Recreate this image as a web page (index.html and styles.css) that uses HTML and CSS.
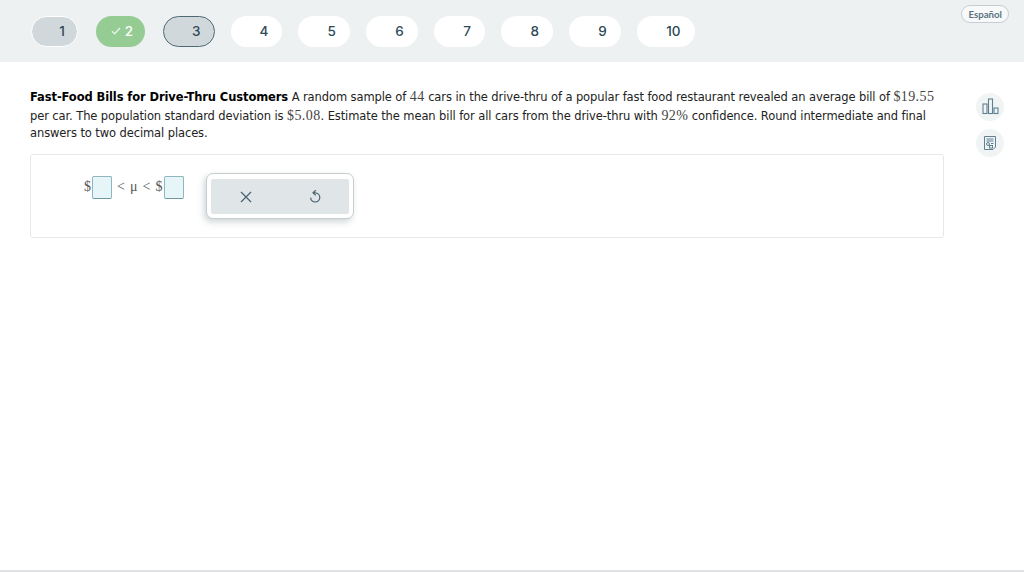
FILE: index.html
```html
<!DOCTYPE html>
<html lang="en">
<head>
  <meta charset="UTF-8" />
  <title>Fast-Food Bills for Drive-Thru Customers</title>
  <link rel="stylesheet" href="styles.css">
</head>
<body>
  <header class="topbar">
    <nav class="steps">
      <div class="step visited">1</div>
      <div class="step correct">
        <svg class="check" width="10" height="8" viewBox="0 0 10 8"><path d="M1 4.2 L3.6 6.8 L9 1" fill="none" stroke="#e6f3e6" stroke-width="1.4"/></svg>
        2
      </div>
      <div class="step current">3</div>
      <div class="step">4</div>
      <div class="step">5</div>
      <div class="step">6</div>
      <div class="step">7</div>
      <div class="step">8</div>
      <div class="step">9</div>
      <div class="step wide">10</div>
    </nav>
    <div class="lang">Español</div>
  </header>

  <main class="content">
    <section class="question">
      <p class="prompt"><b>Fast-Food Bills for Drive-Thru Customers</b> A random sample of <span class="num">44</span> cars in the drive-thru of a popular fast food restaurant revealed an average bill of <span class="num">$19.55</span> per car. The population standard deviation is <span class="num">$5.08</span>. Estimate the mean bill for all cars from the drive-thru with <span class="num">92%</span> confidence. Round intermediate and final answers to two decimal places.</p>
      <div class="answer-card">
        <div class="formula">
          <span class="sym">$</span><span class="blank first"></span>
          <span class="sym rel">&lt; μ &lt; $</span><span class="blank"></span>
        </div>
        <div class="toolbox">
          <div class="toolbox-inner">
            <svg width="14" height="14" viewBox="0 0 14 14"><path d="M2 2 L12 12 M12 2 L2 12" fill="none" stroke="#4a6572" stroke-width="1.3"/></svg>
            <svg width="14" height="16" viewBox="0 0 14 16"><path d="M7.8 1.2 L5 3.8 L7.8 6.4 M5 3.8 H7.2 A4.6 4.6 0 1 1 2.6 8.6" fill="none" stroke="#4a6572" stroke-width="1.2"/></svg>
          </div>
        </div>
      </div>
    </section>
    <aside class="side">
      <div class="side-btn">
        <svg width="18" height="18" viewBox="0 0 18 18"><g fill="none" stroke="#5f8090" stroke-width="1.1"><rect x="2" y="6" width="4" height="9.5"/><rect x="7.5" y="1" width="4" height="14.5"/><rect x="13" y="10" width="4" height="5.5"/></g></svg>
      </div>
      <div class="side-btn">
        <svg width="14" height="16" viewBox="0 0 14 16"><g fill="none" stroke="#5f8090" stroke-width="1"><path d="M1.5 1.5 H12.5 V12 L10 14.5 H1.5 Z"/><path d="M3.5 4 H10.5 M3.5 6 H10.5 M8 8.5 H10.5"/><circle cx="5" cy="9" r="1.5"/><rect x="6.5" y="10.5" width="3" height="2.5"/></g></svg>
      </div>
    </aside>
  </main>
</body>
</html>
```

FILE: styles.css
```css
* { box-sizing: border-box; }
html, body { height: 100%; }
body {
  margin: 0;
  background: #fff;
  font-family: "DejaVu Sans", sans-serif;
  color: #222;
  border-bottom: 2px solid #dfe3e5;
  height: 572px;
  overflow: hidden;
}
.topbar {
  height: 62px;
  background: #eef1f2;
  display: flex;
  justify-content: space-between;
  padding: 4px 15px 0 31px;
}
.steps {
  display: flex;
  align-items: center;
  gap: 16px;
  height: 54px;
}
.step {
  width: 51.7px;
  height: 31px;
  padding-left: 15px;
  border-radius: 16px;
  background: #fff;
  color: #2d4a57;
  font-family: Inter, sans-serif;
  font-weight: 500;
  font-size: 13.5px;
  display: flex;
  align-items: center;
  justify-content: center;
}
.step.wide { width: 58px; }
.step.visited {
  width: 47px;
  background: #d0d8dc;
  border: 1px solid #fff;
}
.step.correct {
  width: 49px;
  margin-left: 2px;
  padding-left: 3px;
  gap: 4px;
  background: #95cc94;
  color: #fff;
}
.step.current {
  margin-left: 2px;
  background: #d0d8dc;
  border: 1.5px solid #4f6a77;
}
.lang {
  margin-top: 1px;
  height: 18px;
  padding: 0 6px;
  border: 1px solid #c6ced2;
  border-radius: 9px;
  background: #f8f9fa;
  color: #5b7280;
  font-family: Lato, sans-serif;
  font-weight: 700;
  font-size: 9.7px;
  line-height: 16px;
}
.content {
  display: flex;
  padding: 25px 15px 0 30px;
}
.question { width: 914px; }
.prompt {
  margin: 0;
  font-size: 11.5px;
  letter-spacing: -0.1px;
  line-height: 16px;
}
.prompt b { color: #000; }
.num {
  font-family: "Liberation Serif", serif;
  font-size: 14px;
  letter-spacing: 0.4px;
  line-height: 19px;
  color: #444;
}
.answer-card {
  margin-top: 13px;
  height: 84px;
  border: 1px solid #e6e9eb;
  border-radius: 3px;
  display: flex;
  align-items: flex-start;
  padding: 18px 0 0 53px;
}
.formula {
  display: flex;
  align-items: center;
  width: 122px;
  height: 26px;
  margin-top: 1px;
  font-family: "Liberation Serif", serif;
  font-size: 14px;
  color: #555;
}
.rel {
  margin: 0 1px 0 5px;
  letter-spacing: 0.8px;
}
.blank {
  width: 20px;
  height: 23px;
  background: #e6f5f8;
  border: 1px solid #8fb5bf;
  border-bottom-color: #6f98a5;
  border-radius: 2px;
}
.blank.first { margin-left: 1px; }
.toolbox {
  width: 148px;
  height: 46px;
  padding: 5px 4px;
  background: #fff;
  border: 1px solid #c6ced2;
  border-radius: 7px;
  box-shadow: -2px 3px 6px rgba(70, 90, 100, 0.25);
}
.toolbox-inner {
  height: 35px;
  background: #e0e5e7;
  border-radius: 2px;
  display: flex;
  align-items: center;
  justify-content: space-around;
}
.side {
  margin-left: 32px;
  margin-top: 6px;
  display: flex;
  flex-direction: column;
  gap: 8px;
}
.side-btn {
  width: 28px;
  height: 28px;
  border-radius: 50%;
  background: #f1f4f5;
  display: flex;
  align-items: center;
  justify-content: center;
}
```
